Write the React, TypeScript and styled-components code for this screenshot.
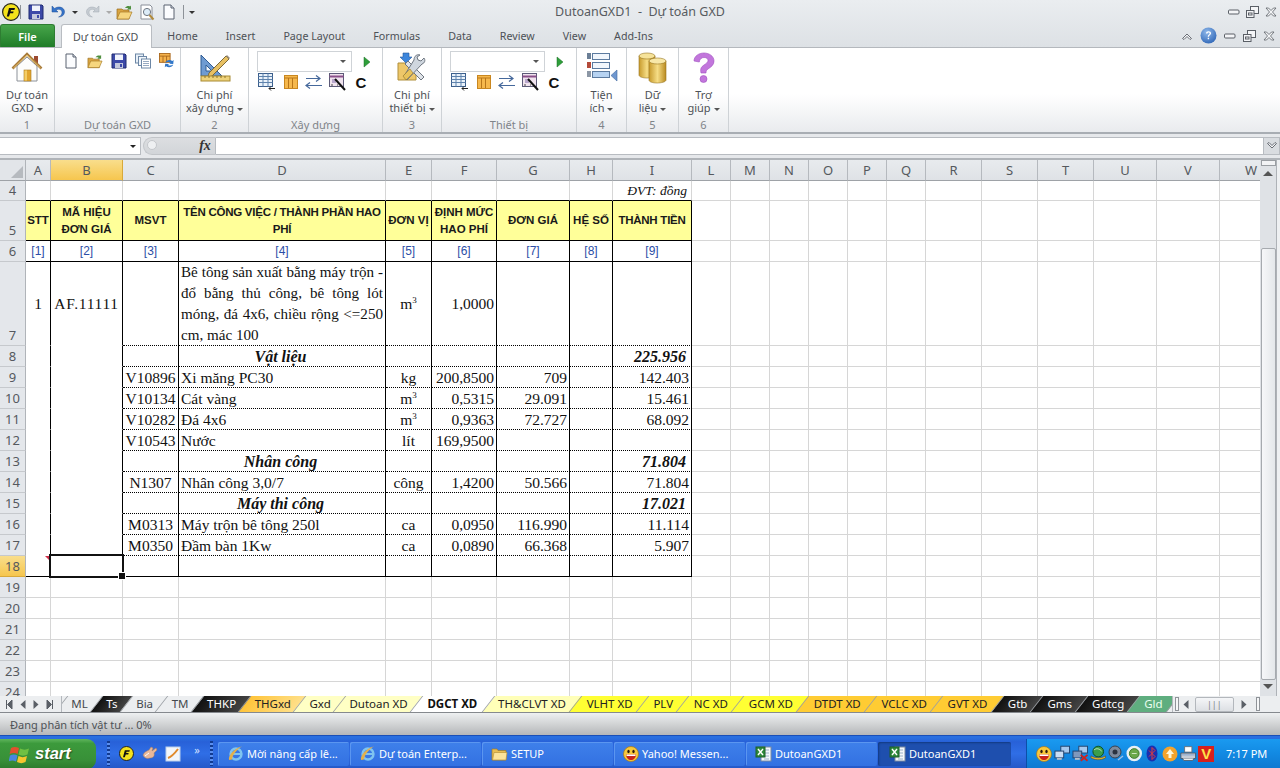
import React from "react";
import styled, { createGlobalStyle } from "styled-components";

const UI = `"Noto Sans", "Liberation Sans", sans-serif`;
const SERIF = `"Liberation Serif", "Times New Roman", serif`;
const ARIAL = `"Liberation Sans", Arial, sans-serif`;

const GlobalStyle = createGlobalStyle`
	html, body {
		margin: 0;
		padding: 0;
		width: 1280px;
		height: 768px;
		overflow: hidden;
		background: #fff;
	}
	* {
		box-sizing: border-box;
	}
`;

/* ---------- icons ---------- */

const Logo = ({ size = 18 }: { size?: number }) => (
	<svg width={size} height={size} viewBox="0 0 18 18">
		<circle cx="9" cy="9" r="8.4" fill="#f4e21c" stroke="#222" strokeWidth="1.2" />
		<path d="M7 5h6l-.6 2H9l-.4 1.4h3l-.5 1.8h-3L7 13.5H4.8z" fill="#111" />
	</svg>
);

const Floppy = ({ size = 16 }: { size?: number }) => (
	<svg width={size} height={size} viewBox="0 0 16 16">
		<path d="M1 1h13l1 1v13H1z" fill="#3c49a8" stroke="#1f2a70" />
		<rect x="4" y="1.5" width="8" height="5.5" fill="#f0f3fb" />
		<rect x="4" y="10" width="8" height="5" fill="#c3c8dc" />
		<rect x="9" y="11" width="2" height="3" fill="#3c49a8" />
	</svg>
);

const Undo = () => (
	<svg width="16" height="16" viewBox="0 0 16 16">
		<path d="M2 2v6h6L6 6c3-1.6 6-.4 6 2.5 0 2-1.2 3.6-3.4 4.5 3.6 0 5.9-2.2 5.9-5.2C14.5 3.5 9 1.5 4.6 4.4z" fill="#3573c9" stroke="#1f4f96" strokeWidth=".5" />
	</svg>
);

const Redo = () => (
	<svg width="16" height="16" viewBox="0 0 16 16" style={{ transform: "scaleX(-1)" }}>
		<path d="M2 2v6h6L6 6c3-1.6 6-.4 6 2.5 0 2-1.2 3.6-3.4 4.5 3.6 0 5.9-2.2 5.9-5.2C14.5 3.5 9 1.5 4.6 4.4z" fill="#c5cbd2" stroke="#a3abb3" strokeWidth=".5" />
	</svg>
);

const OpenFolder = ({ size = 17 }: { size?: number }) => (
	<svg width={size} height={size} viewBox="0 0 17 17">
		<path d="M1 5h5l1 1h6v9H1z" fill="#d9a441" stroke="#9a6f1f" strokeWidth=".7" />
		<path d="M1 15l3-7h12l-3 7z" fill="#f6d67e" stroke="#a67a26" strokeWidth=".7" />
		<path d="M9 4c1.5-2 3.5-2.5 5-1.5l1-1v4h-4l1.3-1.2C11 3.8 10 3.8 9 4z" fill="#4f8f3f" />
	</svg>
);

const Preview = () => (
	<svg width="17" height="17" viewBox="0 0 17 17">
		<path d="M2 1h9l2 2v12H2z" fill="#fff" stroke="#8a8f99" />
		<circle cx="8" cy="8" r="3.6" fill="#dcecf8" stroke="#6f7680" />
		<path d="M10.5 11l4 4.5" stroke="#b08a3c" strokeWidth="2" />
	</svg>
);

const NewDoc = ({ size = 16 }: { size?: number }) => (
	<svg width={size} height={size} viewBox="0 0 16 16">
		<path d="M3 1h7l3 3v11H3z" fill="#fbfcfe" stroke="#5b6270" />
		<path d="M10 1v3h3" fill="#d4dae3" stroke="#5b6270" />
	</svg>
);

const CopySheets = () => (
	<svg width="16" height="16" viewBox="0 0 16 16">
		<rect x=".5" y="1" width="8" height="9" fill="#e8f0f8" stroke="#6d87a6" />
		<rect x="3.5" y="3.5" width="8" height="9" fill="#f1f6fb" stroke="#6d87a6" />
		<rect x="6.5" y="6" width="9" height="9" fill="#fff" stroke="#6d87a6" />
		<path d="M8 8.5h6M8 10.5h6M8 12.5h6" stroke="#97aac2" />
	</svg>
);

const RefreshGrid = () => (
	<svg width="18" height="18" viewBox="0 0 18 18">
		<rect x=".5" y=".5" width="12" height="10" fill="#f4b24c" stroke="#a8661a" />
		<path d="M.5 3.5h12M4.5 3.5v7M8.5 3.5v7" stroke="#a8661a" />
		<path d="M7 11c1-3 5-4 8-2l1.5-1-.5 4.5-4.5-.5 1.5-1c-2-1-4-1-6 0z" fill="#2f76c9" />
		<path d="M16 13c-1 3-5 4-8 2l-1.5 1 .5-4 4.5.5-1.5 1c2 1 4 .8 6-.5z" fill="#2f76c9" />
	</svg>
);

const House = () => (
	<svg width="32" height="32" viewBox="0 0 32 32">
		<rect x="23" y="4" width="4" height="8" fill="#9c4a30" />
		<path d="M6 14v15h20V14L16 5z" fill="#fdfdfb" stroke="#8c9199" />
		<path d="M1.5 16.5L16 2l14.5 14.5" fill="none" stroke="#a87a3a" strokeWidth="2.6" />
		<path d="M2.5 16L16 3l13.5 13" fill="none" stroke="#e8c46e" strokeWidth="1" />
		<rect x="13" y="18" width="7" height="11" fill="#e2a52e" stroke="#a87a20" strokeWidth=".6" />
		<rect x="13.5" y="18.5" width="2.5" height="10" fill="#f4cd66" />
	</svg>
);

const SquarePencil = () => (
	<svg width="34" height="32" viewBox="0 0 34 32">
		<path d="M3 3v21h21z" fill="#6f9bd1" stroke="#2f5c94" />
		<path d="M8 13v6h6z" fill="#f4f7fb" stroke="#2f5c94" />
		<path d="M11 21L28 4l3 3-17 17-4 1z" fill="#e8c062" stroke="#7d6a3a" />
		<path d="M28 4l3 3 1-1-3-3z" fill="#9a8f7f" />
		<rect x="3" y="24" width="29" height="5" fill="#eed27a" stroke="#a88a32" />
		<path d="M7 24v2M11 24v2M15 24v2M19 24v2M23 24v2M27 24v2" stroke="#8f7426" />
	</svg>
);

const Tools = () => (
	<svg width="32" height="32" viewBox="0 0 32 32">
		<path d="M2 11h8l2 2h8v15H2z" fill="#eec769" stroke="#b08f3c" />
		<path d="M6 0h6v4h3l-6 6-6-6h3z" transform="translate(1 1)" fill="#3d86dc" stroke="#25599c" strokeWidth=".6" />
		<path d="M9 12l16 16 3-3L12 9z" fill="#dfe3e8" stroke="#6e7680" />
		<path d="M26 12c3-1 3.5-4 2-6l-3 3-3-1-1-3 3-2c-3-1-6 1-6 5L8 24l3 4z" fill="#cfd6de" stroke="#6e7680" />
		<path d="M14 17l-7 7 3 4 7-7z" fill="#e9c35b" stroke="#927427" strokeWidth=".6" />
	</svg>
);

const Combos = () => (
	<svg width="32" height="30" viewBox="0 0 32 30">
		<g stroke="#5b7a9f" fill="#fff">
			<rect x="6.5" y="1.5" width="17" height="6" fill="#f1f6fc" />
			<rect x="6.5" y="10.5" width="17" height="6" fill="#f1f6fc" />
			<rect x="6.5" y="19.5" width="17" height="6" fill="#b7d3f2" />
		</g>
		<rect x="1" y="1" width="4" height="6" fill="#6b7f96" />
		<rect x="1" y="10" width="4" height="6" fill="#b44a3a" />
		<rect x="1" y="19" width="4" height="6" fill="#8c97a5" />
		<path d="M31 18v11l-6-5.5z" fill="#6f97cf" stroke="#3f689f" strokeWidth=".6" />
	</svg>
);

const Database = () => (
	<svg width="30" height="32" viewBox="0 0 30 32">
		<defs>
			<linearGradient id="cyl" x1="0" x2="1" y1="0" y2="0">
				<stop offset="0" stopColor="#c79a2c" />
				<stop offset=".5" stopColor="#f6dd85" />
				<stop offset="1" stopColor="#b98a20" />
			</linearGradient>
		</defs>
		<path d="M1 4v19c0 2 4 3 8 3s8-1 8-3V4z" fill="url(#cyl)" stroke="#97741e" strokeWidth=".6" />
		<ellipse cx="9" cy="4" rx="8" ry="3" fill="#f6e39a" stroke="#97741e" strokeWidth=".6" />
		<path d="M11 9v19c0 2 4 3 8 3s9-1 9-3V9z" fill="url(#cyl)" stroke="#97741e" strokeWidth=".6" />
		<ellipse cx="19.5" cy="9" rx="8.5" ry="3" fill="#f8e8a8" stroke="#97741e" strokeWidth=".6" />
	</svg>
);

const Question = () => (
	<svg width="26" height="32" viewBox="0 0 26 32">
		<path d="M3 9C3 4 8 1 13 1s10 3 10 8c0 4-3 6-6 8-1.5 1-2 2-2 4h-5c-1-4 0-6 3-8 2-1.5 4-2.5 4-4.5S15.3 5.5 13 5.5 8.5 7 8.3 10z" fill="#c276dc" stroke="#a050c0" strokeWidth=".6" />
		<circle cx="12.5" cy="27" r="3.5" fill="#c276dc" stroke="#a050c0" strokeWidth=".6" />
	</svg>
);

const GridAdd = () => (
	<svg width="18" height="18" viewBox="0 0 18 18">
		<rect x=".5" y=".5" width="14" height="13" fill="#eaf2fa" stroke="#3c5f8c" />
		<path d="M.5 3.5h14M.5 6.5h14M.5 9.5h14M5 .5v13M10 .5v13" stroke="#5f83ad" />
		<path d="M11 15.5h6M13 13.5l-2 2 2 2" stroke="#222" fill="none" />
	</svg>
);

const OrangeTable = () => (
	<svg width="16" height="16" viewBox="0 0 16 16">
		<rect x="1.5" y="1.5" width="13" height="13" fill="#f6b84c" stroke="#c98720" />
		<path d="M1.5 4h13M5.5 4v10M9.5 4v10" stroke="#b8761a" />
	</svg>
);

const Swap = () => (
	<svg width="18" height="16" viewBox="0 0 18 16">
		<path d="M1 4.5h14M11 1.500l4 3-4 3M1 11.5h16M5 8.5l-4 3 4 3" stroke="#45689b" strokeWidth="1.2" fill="none" />
	</svg>
);

const Wand = () => (
	<svg width="18" height="18" viewBox="0 0 18 18">
		<rect x=".5" y=".5" width="14" height="13" fill="#f0e3ee" stroke="#5c5a78" />
		<path d="M.5 3.5h14" stroke="#8a4f8a" strokeWidth="2" />
		<path d="M3 6h4v4H3z" fill="#b9a7cc" />
		<path d="M6 6l10 11" stroke="#111" strokeWidth="2" />
		<path d="M2 12h2M8 12h1" stroke="#444" />
	</svg>
);

const Play = () => (
	<svg width="8" height="12" viewBox="0 0 8 12">
		<path d="M1 1l6 5-6 5z" fill="#2e9e3a" stroke="#1a6f25" strokeWidth=".5" />
	</svg>
);

const Chevron = ({ down }: { down?: boolean }) => (
	<svg width="12" height="10" viewBox="0 0 12 10" style={down ? { transform: "scaleY(-1)" } : undefined}>
		<path d="M1.5 7.5L6 3l4.5 4.5-1.5 1L6 5.5l-3 3z" fill="#f4f5f7" stroke="#5a5f66" strokeWidth=".9" />
	</svg>
);

const WinMin = () => (
	<svg width="12" height="10" viewBox="0 0 12 10">
		<rect x=".5" y="3" width="10.5" height="4" rx="1" fill="#f4f5f7" stroke="#5a5f66" />
	</svg>
);

const WinRestore = () => (
	<svg width="13" height="12" viewBox="0 0 13 12">
		<rect x="4.5" y=".5" width="8" height="7" fill="#f4f5f7" stroke="#5a5f66" />
		<rect x=".5" y="4.5" width="7.5" height="7" fill="#f4f5f7" stroke="#5a5f66" />
		<rect x="2.5" y="7" width="3.5" height="2" fill="none" stroke="#5a5f66" />
	</svg>
);

const WinClose = () => (
	<svg width="12" height="10" viewBox="0 0 12 10">
		<path d="M1 1h2.5L6 3.5 8.5 1H11L7.5 5 11 9H8.5L6 6.5 3.5 9H1l3.5-4z" fill="#f4f5f7" stroke="#5a5f66" strokeWidth=".8" />
	</svg>
);

const Help = () => (
	<svg width="17" height="17" viewBox="0 0 17 17">
		<defs>
			<radialGradient id="hlp" cx=".4" cy=".3" r=".8">
				<stop offset="0" stopColor="#8fb8ea" />
				<stop offset="1" stopColor="#2a62b4" />
			</radialGradient>
		</defs>
		<circle cx="8.5" cy="8.5" r="8" fill="url(#hlp)" />
		<path d="M6 6.5c0-1.5 1.2-2.3 2.6-2.3s2.5.9 2.5 2.1c0 1.700-2.100 1.800-2.100 3.500H7.700c0-2.300 1.900-2.400 1.900-3.400 0-.5-.4-.9-1-.9s-1.100.4-1.100 1zM7.700 10.800h1.400v1.500H7.700z" fill="#fff" />
	</svg>
);

const NavFirst = () => (
	<svg width="8" height="9" viewBox="0 0 8 9">
		<path d="M1.5 0v9M7 0v9L2.5 4.5z" stroke="#5a5f66" fill="#5a5f66" />
	</svg>
);
const NavPrev = () => (
	<svg width="6" height="9" viewBox="0 0 6 9">
		<path d="M5.5 0v9L.5 4.5z" fill="#5a5f66" />
	</svg>
);
const NavNext = () => (
	<svg width="6" height="9" viewBox="0 0 6 9">
		<path d="M.5 0v9l5-4.5z" fill="#5a5f66" />
	</svg>
);
const NavLast = () => (
	<svg width="8" height="9" viewBox="0 0 8 9">
		<path d="M6.5 0v9M1 0v9l4.5-4.5z" stroke="#5a5f66" fill="#5a5f66" />
	</svg>
);

const XpFlag = () => (
	<svg width="21" height="20" viewBox="0 0 21 20">
		<path d="M2 4c2.500-1.500 5-1.500 8 0l-1.400 6c-2.500-1.500-5-1.500-8 0z" fill="#e2502e" />
		<path d="M11 4.500c3 1.500 6 1.500 9 0l-1.500 6c-3 1.500-6 1.500-9 0z" fill="#6fc043" />
		<path d="M1 11.500c2.500-1.500 5-1.500 7.500 0L7 17.500c-2.500-1.500-5-1.500-7.500 0z" fill="#4a86e0" />
		<path d="M9.500 12c3 1.500 5.500 1.500 8.500 0L16.500 18c-3 1.500-5.500 1.500-8.500 0z" fill="#f6c62e" />
	</svg>
);

const HandIcon = () => (
	<svg width="16" height="15" viewBox="0 0 16 15">
		<path d="M1 9c1-3 4-4 6-5l2-3 2 1-1 3 4-3 1 2-3 3c1 3-1 5-4 5-3 1-6 0-7-3z" fill="#e8b89a" stroke="#a87a5a" strokeWidth=".5" />
		<path d="M3 10l4-3" stroke="#fff" />
	</svg>
);

const ChartDoc = () => (
	<svg width="16" height="16" viewBox="0 0 16 16">
		<rect x="1" y="1" width="14" height="14" fill="#f2f6fb" stroke="#bcd0ea" />
		<path d="M3 12C6 11 10 7 13 3" stroke="#e08a2c" strokeWidth="2" fill="none" />
	</svg>
);

const IeIcon = () => (
	<svg width="17" height="17" viewBox="0 0 17 17">
		<circle cx="9" cy="9" r="5.5" fill="none" stroke="#7fc4f0" strokeWidth="2.4" />
		<path d="M4 9h10" stroke="#7fc4f0" strokeWidth="1.8" />
		<path d="M2 15C1 11 7 3 15 1.5c-5 2.5-10 9-10 13z" fill="#e2b04c" />
	</svg>
);

const FolderTask = () => (
	<svg width="17" height="16" viewBox="0 0 17 16">
		<path d="M1 3h5l1 1.5h8V14H1z" fill="#e8bd52" stroke="#9d7c2b" strokeWidth=".7" />
		<path d="M1.5 14L3 6.5h13L15 14z" fill="#fbe39a" stroke="#b7933b" strokeWidth=".7" />
	</svg>
);

const Smiley = ({ size = 16 }: { size?: number }) => (
	<svg width={size} height={size} viewBox="0 0 16 16">
		<circle cx="8" cy="8" r="7.5" fill="#f8c93a" stroke="#a8761a" strokeWidth=".7" />
		<ellipse cx="5.5" cy="5.5" rx="1.2" ry="1.7" fill="#2a1a10" />
		<ellipse cx="10.5" cy="5.5" rx="1.2" ry="1.7" fill="#2a1a10" />
		<path d="M3 8.5h10c0 3.5-2.5 5.5-5 5.5s-5-2-5-5.500z" fill="#c8241c" />
		<path d="M3.5 8.5h9V10h-9z" fill="#fff" />
	</svg>
);

const ExcelDoc = () => (
	<svg width="17" height="17" viewBox="0 0 17 17">
		<rect x="6" y="2" width="10" height="14" fill="#f4f7fb" stroke="#7a8aa0" />
		<path d="M9 5h5M9 8h5M9 11h5M9 14h5" stroke="#9ab0c8" />
		<rect x="1" y="2" width="9" height="10" fill="#2f8a3c" stroke="#1e5f28" />
		<path d="M3 4l5 6M8 4l-5 6" stroke="#fff" strokeWidth="1.4" />
	</svg>
);

const MonitorPair = ({ cross }: { cross?: boolean }) => (
	<svg width="17" height="17" viewBox="0 0 17 17">
		<rect x="7" y="1" width="9" height="7" fill="#a6c8ee" stroke="#26456e" />
		<rect x="1" y="6" width="9" height="7" fill={cross ? "#7f98bc" : "#c9ddf5"} stroke="#26456e" />
		<rect x="3" y="13" width="5" height="2" fill="#b8bec8" />
		{cross && <path d="M9 10l7 6M16 10l-7 6" stroke="#d2201c" strokeWidth="1.8" />}
	</svg>
);

const TrayGlobe = () => (
	<svg width="17" height="17" viewBox="0 0 17 17">
		<circle cx="8.5" cy="6.5" r="5.5" fill="#3b9e4a" stroke="#0e4e20" />
		<path d="M4 5c2-2 5-2 8 1" stroke="#cfe9c4" fill="none" />
		<path d="M1 11c3 2 10 3 15 0v2c-5 3-12 2-15 0z" fill="#e6b62c" stroke="#5a430c" strokeWidth=".5" />
	</svg>
);

const Speaker = () => (
	<svg width="16" height="17" viewBox="0 0 16 17">
		<circle cx="7" cy="7" r="6" fill="#7d8a9c" stroke="#39424f" />
		<circle cx="7" cy="7" r="2.5" fill="#2b3340" />
		<path d="M10 15l5-4" stroke="#9dc0e6" strokeWidth="1.4" />
	</svg>
);

const GreenDot = () => (
	<svg width="17" height="17" viewBox="0 0 17 17">
		<circle cx="8.5" cy="8.5" r="8" fill="#e8f0f4" />
		<circle cx="8.5" cy="8.5" r="5" fill="#6aa84a" stroke="#3a7a2a" />
		<path d="M6 8.5h5" stroke="#cfe9c4" />
	</svg>
);

const Bluetooth = () => (
	<svg width="12" height="17" viewBox="0 0 12 17">
		<ellipse cx="6" cy="8.5" rx="5.5" ry="8" fill="#1a2fb0" />
		<path d="M3 5.5l6 6-3 3v-12l3 3-6 6" stroke="#e23c3c" fill="none" />
	</svg>
);

const OrangeUp = () => (
	<svg width="16" height="16" viewBox="0 0 16 16">
		<circle cx="8" cy="8" r="7.5" fill="#f4a32c" />
		<path d="M8 3l4 5H9.5v4h-3V8H4z" fill="#fff6d8" />
	</svg>
);

const Printer = () => (
	<svg width="18" height="17" viewBox="0 0 18 17">
		<path d="M5 1h8v6H5z" fill="#fff" stroke="#67707c" />
		<path d="M1 8h16v6H1z" fill="#c5ccd6" stroke="#4b5562" />
		<path d="M3 14l1 2h10l1-2" fill="#fff" stroke="#4b5562" />
		<path d="M2 10h14" stroke="#7ea0cc" />
	</svg>
);

const Caret = styled.span<{ $c?: string }>`
	display: inline-block;
	width: 0;
	height: 0;
	border-left: 3px solid transparent;
	border-right: 3px solid transparent;
	border-top: 3px solid ${({ $c }) => $c || "#555"};
	vertical-align: middle;
	margin-left: 3px;
`;

/* ---------- window header ---------- */

const Page = styled.div`
	width: 1280px;
	height: 768px;
	display: flex;
	flex-direction: column;
	overflow: hidden;
	font-family: ${UI};
	background: #fff;
`;

const Head = styled.div`
	height: 48px;
	background: linear-gradient(#eaedf0, #dde1e5);
	border-bottom: 1px solid #b4b8bd;
`;

const TitleBar = styled.div`
	height: 24px;
	display: grid;
	grid-template-columns: 1fr auto 1fr;
	align-items: center;
`;

const Qat = styled.div`
	display: flex;
	align-items: center;
	padding-left: 2px;
	height: 22px;
`;

const QatBtn = styled.span<{ $w?: number; $ml?: number }>`
	width: ${({ $w }) => $w || 22}px;
	margin-left: ${({ $ml }) => $ml || 0}px;
	height: 20px;
	display: flex;
	align-items: center;
	justify-content: center;
`;

const QatSep = styled.span<{ $l: number; $r: number }>`
	width: 1px;
	height: 14px;
	background: #8d9298;
	margin: 0 ${({ $r }) => $r}px 0 ${({ $l }) => $l}px;
`;

const Title = styled.div`
	font-size: 12.5px;
	color: #575b60;
	white-space: pre;
	padding-bottom: 2px;
`;

const WinButtons = styled.div<{ $gap: number }>`
	display: flex;
	align-items: center;
	justify-content: flex-end;
	gap: ${({ $gap }) => $gap}px;
	padding-right: 3px;
`;

const TabRow = styled.div`
	height: 23px;
	display: flex;
	align-items: flex-end;
`;

const FileTab = styled.div`
	width: 55px;
	height: 23px;
	margin-right: 6px;
	color: #fff;
	font-size: 11px;
	font-weight: 600;
	display: flex;
	align-items: center;
	justify-content: center;
	background: linear-gradient(#47a54a, #1f7c28);
	border: 1px solid #2e7d32;
	border-bottom: 0;
	border-radius: 3px 3px 0 0;
`;

const RibbonTab = styled.div<{ $active?: boolean }>`
	height: ${({ $active }) => ($active ? 24 : 23)}px;
	padding: ${({ $active }) => ($active ? "0 13px 0 11px" : "0 14px")};
	margin-right: ${({ $active }) => ($active ? 1 : 0)}px;
	margin-bottom: ${({ $active }) => ($active ? -1 : 0)}px;
	font-size: 10.7px;
	color: #4d5156;
	display: flex;
	align-items: center;
	white-space: nowrap;
	background: ${({ $active }) => ($active ? "#fff" : "transparent")};
	border: ${({ $active }) => ($active ? "1px solid #b9bdc2" : "0")};
	border-bottom: 0;
	border-radius: 3px 3px 0 0;
	position: relative;
`;

const HelpArea = styled.div`
	margin-left: auto;
	display: flex;
	align-items: center;
	gap: 7px;
	padding-right: 5px;
	height: 23px;
`;

/* ---------- ribbon ---------- */

const Ribbon = styled.div`
	height: 86px;
	display: flex;
	background: linear-gradient(#fff 0%, #fff 55%, #e9ebee 100%);
	border-bottom: 2px solid #a8adb3;
`;

const Group = styled.div<{ $w: number }>`
	width: ${({ $w }) => $w}px;
	flex: none;
	display: flex;
	flex-direction: column;
	border-right: 1px solid #ced2d6;
`;

const GroupBody = styled.div`
	flex: 1;
	min-height: 0;
`;

const GroupLabel = styled.div`
	height: 17px;
	font-size: 11px;
	line-height: 19px;
	color: #7f8489;
	text-align: center;
`;

const BigButton = styled.div`
	display: flex;
	flex-direction: column;
	align-items: center;
	padding-top: 4px;
	font-size: 11px;
	line-height: 13px;
	color: #4d5156;
	text-align: center;
`;

const BigIcon = styled.div`
	height: 34px;
	display: flex;
	align-items: flex-start;
	justify-content: center;
	margin-bottom: 2px;
`;

const SmallRow = styled.div<{ $gap: number }>`
	display: flex;
	align-items: center;
	gap: ${({ $gap }) => $gap}px;
	padding: 4px 0 0 8px;
`;

const Slot = styled.span`
	width: 16px;
	height: 18px;
	display: flex;
	align-items: center;
	justify-content: center;
`;

const ComboRow = styled.div`
	display: flex;
	align-items: center;
	padding: 3px 0 0 8px;
`;

const Combo = styled.div`
	width: 95px;
	height: 21px;
	background: #fff;
	border: 1px solid #cfd3d7;
	display: flex;
	align-items: center;
	justify-content: flex-end;
	padding-right: 5px;
	margin-right: 11px;
`;

const ToolRow = styled.div`
	display: flex;
	align-items: center;
	gap: 3.5px;
	padding: 0 0 0 8px;
`;

const ToolSlot = styled.span`
	width: 20px;
	height: 20px;
	display: flex;
	align-items: center;
	justify-content: center;
	font-family: ${ARIAL};
	font-weight: 700;
	font-size: 15px;
	color: #111;
`;

/* ---------- formula bar ---------- */

const FormulaBar = styled.div`
	height: 26px;
	padding-top: 3px;
	display: flex;
	background: #e6e8eb;
	border-bottom: 2px solid #b0b4b9;
`;

const FormulaInner = styled.div`
	height: 18px;
	flex: 1;
	display: flex;
	align-items: stretch;
`;

const NameBox = styled.div`
	width: 141px;
	background: #fff;
	border: 1px solid #b8bcc1;
	border-width: 1px 1px 1px 0;
	display: flex;
	align-items: center;
	justify-content: flex-end;
	padding-right: 4px;
`;

const FxWell = styled.div`
	width: 73px;
	display: flex;
	align-items: center;
	justify-content: flex-end;
	font-family: ${SERIF};
	font-style: italic;
	font-weight: 700;
	font-size: 14px;
	color: #333;
	background: linear-gradient(#dcdee1, #d2d5d9);
	border-radius: 9px 0 0 9px;
	border: 1px solid #c2c5c9;
	border-right: 1px solid #b8bcc1;
	margin-left: 2px;
	position: relative;
	&::before {
		content: "";
		position: absolute;
		left: 3px;
		top: 2px;
		width: 8px;
		height: 8px;
		border-radius: 50%;
		background: #eef0f2;
		border: 1px solid #c4c7cb;
	}
`;

const FxText = styled.span`
	width: 20px;
	text-align: center;
`;

const FormulaInput = styled.div`
	flex: 1;
	background: #fff;
	border: 1px solid #b8bcc1;
	border-width: 1px 1px 1px 0;
`;

const FormulaDrop = styled.div`
	width: 16px;
	background: #d9dce0;
	border: 1px solid #b8bcc1;
	border-left: 0;
	display: flex;
	align-items: center;
	justify-content: center;
`;

/* ---------- sheet ---------- */

const SheetArea = styled.div`
	height: 536px;
	display: flex;
	overflow: hidden;
`;

const colWidths = [26, 25, 72, 56, 207, 46, 65, 73, 43, 79, 39, 39, 39, 39, 39, 39, 56, 56, 56, 63, 63, 63];
const rowHeights = [21, 20, 40, 21, 84, ...Array(16).fill(21), 21];

const SheetGrid = styled.div`
	width: 1260px;
	height: 536px;
	display: grid;
	grid-template-columns: ${colWidths.map((w) => `${w}px`).join(" ")};
	grid-template-rows: ${rowHeights.map((h) => `${h}px`).join(" ")};
	overflow: hidden;
`;

const Corner = styled.div`
	background: #e2e5e9;
	border-right: 1px solid #b0b4b9;
	border-bottom: 1px solid #9ea2a7;
	position: relative;
	&::after {
		content: "";
		position: absolute;
		right: 2px;
		bottom: 2px;
		border-left: 12px solid transparent;
		border-bottom: 12px solid #b6babf;
	}
`;

const ColHead = styled.div<{ $sel?: boolean }>`
	background: ${({ $sel }) => ($sel ? "linear-gradient(#f9de8c, #f6c64e)" : "linear-gradient(#e8ebee, #dfe2e6)")};
	border-right: 1px solid ${({ $sel }) => ($sel ? "#d8a93a" : "#b5b9be")};
	border-bottom: 1px solid #9ea2a7;
	color: #55595e;
	font-size: 13px;
	font-family: ${UI};
	display: flex;
	align-items: center;
	justify-content: center;
`;

const RowHead = styled.div<{ $sel?: boolean }>`
	background: ${({ $sel }) => ($sel ? "linear-gradient(#f9de8c, #f6c64e)" : "#e4e7eb")};
	border-right: 1px solid #b0b4b9;
	border-bottom: 1px solid ${({ $sel }) => ($sel ? "#d8a93a" : "#c6c9cd")};
	color: #55595e;
	font-size: 13px;
	line-height: 15px;
	display: flex;
	align-items: flex-end;
	justify-content: center;
	padding-bottom: 2px;
`;

type LineKind = "grid" | "solid" | "dotted" | "none";
type CellKind = "plain" | "head" | "index" | "note" | "group" | "sum";

const lineCss = (l: LineKind) =>
	l === "solid" ? "1px solid #000" : l === "dotted" ? "1px dotted #000" : l === "none" ? "1px solid transparent" : "1px solid #d6d6d6";

const Cell = styled.div<{ $kind?: CellKind; $align?: string; $line: LineKind; $frame?: boolean; $justify?: boolean }>`
	position: relative;
	display: flex;
	align-items: center;
	justify-content: ${({ $align }) => ($align === "right" ? "flex-end" : $align === "center" ? "center" : "flex-start")};
	text-align: ${({ $align, $justify }) => ($justify ? "justify" : $align || "left")};
	padding: 0 2px;
	white-space: ${({ $justify }) => ($justify ? "normal" : "nowrap")};
	border-right: ${({ $frame }) => ($frame ? "1px solid #000" : "1px solid #d6d6d6")};
	border-bottom: ${({ $line }) => lineCss($line)};
	color: #111;
	font-family: ${SERIF};
	font-size: ${({ $justify }) => ($justify ? 15.1 : 15.5)}px;
	line-height: 21px;
	${({ $kind }) =>
		$kind === "head" &&
		`
		background: #ffff99;
		font-family: ${ARIAL};
		font-weight: 700;
		font-size: 11.5px;
		line-height: 17px;
		color: #1a1a1a;
		padding: 0;
	`}
	${({ $kind }) =>
		$kind === "index" &&
		`
		font-family: ${ARIAL};
		font-size: 12px;
		color: #2c4ea6;
	`}
	${({ $kind }) =>
		$kind === "note" &&
		`
		font-style: italic;
		font-size: 13.5px;
		padding-right: 4px;
	`}
	${({ $kind }) =>
		($kind === "group" || $kind === "sum") &&
		`
		font-style: italic;
		font-weight: 700;
		font-size: 16px;
		padding-right: 5px;
	`}
`;

const WideCode = styled.span`
	letter-spacing: 0.7px;
`;

const TightHead = styled.span`
	letter-spacing: -0.25px;
`;

const Sup = styled.sup`
	font-size: 9px;
	line-height: 0;
`;

const Selection = styled.div`
	position: absolute;
	left: -2px;
	right: -2px;
	top: -2px;
	bottom: -2px;
	border: 2px solid #111;
	outline: 1px solid #fff;
	outline-offset: -3px;
	z-index: 2;
	&::after {
		content: "";
		position: absolute;
		right: -4px;
		bottom: -4px;
		width: 6px;
		height: 6px;
		background: #111;
		border: 1px solid #fff;
	}
`;

const CommentMark = styled.span`
	position: absolute;
	right: 0;
	top: 0;
	border-left: 5px solid transparent;
	border-top: 5px solid #d0304a;
`;

const VScroll = styled.div`
	width: 20px;
	height: 536px;
	display: flex;
	flex-direction: column;
	align-items: center;
	padding-right: 4px;
	background: #dfe2e6;
	box-shadow: inset -3px 0 0 #eef0f2, inset -4px 0 0 #aeb2b7;
`;

const SplitHandle = styled.div`
	width: 15px;
	height: 6px;
	background: #f2f3f5;
	border: 1px solid #9a9ea3;
	margin-bottom: 5px;
`;

const ScrollArrow = styled.div<{ $down?: boolean }>`
	width: 0;
	height: 0;
	border-left: 5px solid transparent;
	border-right: 5px solid transparent;
	${({ $down }) => ($down ? "border-top: 5px solid #555;" : "border-bottom: 5px solid #555;")}
`;

const VThumb = styled.div`
	width: 15px;
	height: 432px;
	margin-top: 72px;
	margin-bottom: 4px;
	background: linear-gradient(90deg, #f6f7f9, #e4e7ea);
	border: 1px solid #a6aaaf;
	border-radius: 2px;
`;

/* ---------- sheet tabs ---------- */

const TabsBar = styled.div`
	height: 17px;
	display: flex;
	background: #eceef0;
	border-bottom: 1px solid #85898e;
`;

const TabNav = styled.div`
	width: 62px;
	flex: none;
	display: flex;
	align-items: center;
	padding-left: 5px;
	gap: 7px;
	border-right: 1px solid #b4b8bd;
`;

const TabStrip = styled.div`
	width: 1110px;
	flex: none;
	display: flex;
	overflow: hidden;
`;

const SheetTab = styled.div<{ $bg?: string; $fg?: string; $active?: boolean; $pad: number }>`
	position: relative;
	flex: none;
	height: 16px;
	padding: 0 ${({ $pad }) => $pad}px;
	font-family: ${UI};
	font-size: 11.5px;
	font-weight: ${({ $active }) => ($active ? 700 : 400)};
	line-height: 15px;
	white-space: nowrap;
	color: ${({ $fg }) => $fg || "#45494e"};
	z-index: ${({ $active }) => ($active ? 2 : 1)};
	&::before {
		content: "";
		position: absolute;
		inset: 0 -1px 0 -1px;
		z-index: -1;
		transform: skewX(-38deg);
		background: ${({ $bg, $active }) => ($active ? "#fff" : $bg || "#eceef0")};
		border-left: 1px solid #9a9ea3;
		border-right: 1px solid #9a9ea3;
	}
`;

const HScroll = styled.div`
	flex: 1;
	display: flex;
	align-items: center;
	padding-right: 20px;
	background: #eceef0;
	border-left: 1px solid #b4b8bd;
`;

const HHandle = styled.span<{ $end?: boolean }>`
	width: 4px;
	height: 14px;
	background: #f6f7f8;
	border: 1px solid #8f9398;
	margin: ${({ $end }) => ($end ? "0 0 0 auto" : "0 4px 0 2px")};
`;

const HThumb = styled.div`
	width: 39px;
	height: 15px;
	margin: 0 7px 0 6px;
	background: linear-gradient(#f5f6f8, #dcdfe3);
	border: 1px solid #b3b7bc;
	border-radius: 2px;
	display: flex;
	align-items: center;
	justify-content: center;
	font-size: 8px;
	color: #777;
	letter-spacing: 0.5px;
`;

const StatusBar = styled.div`
	height: 22px;
	padding-left: 10px;
	font-size: 11px;
	display: flex;
	align-items: center;
	color: #4e5257;
	background: linear-gradient(#eef0f1, #b5b7b9);
`;

/* ---------- taskbar ---------- */

const Taskbar = styled.div`
	height: 33px;
	padding-top: 3px;
	display: flex;
	align-items: center;
	background: linear-gradient(#2a6fe0 0%, #2a6fe0 6%, #2861d8 18%, #2f6ee6 55%, #2558c8 100%);
	border-top: 1px solid #1a4fb8;
`;

const StartButton = styled.div`
	width: 96px;
	height: 30px;
	flex: none;
	display: flex;
	align-items: center;
	gap: 5px;
	padding-left: 9px;
	color: #fff;
	font-family: ${ARIAL};
	font-style: italic;
	font-weight: 700;
	font-size: 16.5px;
	text-shadow: 1px 1px 1px #2a4f22;
	background: linear-gradient(#5fb55c 0%, #3c9a3c 15%, #389038 70%, #2c7a2c 100%);
	border-radius: 0 9px 9px 0;
`;

const Grip = styled.span`
	width: 3px;
	height: 25px;
	flex: none;
	background: repeating-linear-gradient(#123a90 0 2px, #5b8ff0 2px 4px);
`;

const QuickLaunch = styled.div`
	width: 122px;
	flex: none;
	display: flex;
	align-items: center;
	padding-left: 11px;
`;

const QuickSlot = styled.span<{ $first?: boolean }>`
	width: 23px;
	height: 20px;
	display: flex;
	align-items: center;
	justify-content: center;
	margin-left: ${({ $first }) => ($first ? 5 : 0)}px;
`;

const More = styled.span`
	width: 26px;
	text-align: center;
	color: #cfe0ff;
	font-size: 11px;
	margin-top: -8px;
`;

const Tasks = styled.div`
	flex: 1;
	display: flex;
	gap: 1px;
	height: 24px;
`;

const Task = styled.div<{ $active?: boolean; $w?: number }>`
	width: ${({ $w }) => $w || 131}px;
	height: 24px;
	flex: none;
	display: flex;
	align-items: center;
	gap: 3px;
	padding-left: ${({ $active }) => ($active ? 11 : 9)}px;
	font-size: 11px;
	color: #fff;
	white-space: nowrap;
	overflow: hidden;
	border-radius: 2px;
	background: ${({ $active }) => ($active ? "#1e4fae" : "linear-gradient(#3f80ea, #3371e2)")};
	box-shadow: ${({ $active }) => ($active ? "inset 1px 1px 2px #123a80" : "inset 1px 1px 0 #5b96f0")};
`;

const Tray = styled.div`
	width: 254px;
	height: 30px;
	flex: none;
	display: flex;
	align-items: center;
	gap: 1.5px;
	padding-left: 9px;
	background: linear-gradient(#1a9af0, #1289e2 50%, #0f78d0);
	border-left: 1px solid #0c4fa8;
`;

const TrayIcon = styled.span`
	width: 16.5px;
	height: 20px;
	flex: none;
	display: flex;
	align-items: center;
	justify-content: center;
`;

const VBadge = styled.span`
	width: 16px;
	height: 16px;
	background: #d8201c;
	color: #ffe24a;
	font-family: ${ARIAL};
	font-weight: 700;
	font-size: 15px;
	line-height: 16px;
	text-align: center;
`;

const Clock = styled.span`
	margin-left: 10px;
	color: #fff;
	font-size: 11px;
`;

/* ---------- data ---------- */

type Row = {
	n: number;
	line: LineKind;
	cells: (React.ReactNode | null)[];
};

const m3 = (
	<span>
		m<Sup>3</Sup>
	</span>
);

const rows: Row[] = [
	{ n: 9, line: "dotted", cells: [null, null, "V10896", "Xi măng PC30", "kg", "200,8500", "709", null, "142.403"] },
	{ n: 10, line: "dotted", cells: [null, null, "V10134", "Cát vàng", m3, "0,5315", "29.091", null, "15.461"] },
	{ n: 11, line: "dotted", cells: [null, null, "V10282", "Đá 4x6", m3, "0,9363", "72.727", null, "68.092"] },
	{ n: 12, line: "dotted", cells: [null, null, "V10543", "Nước", "lít", "169,9500", null, null, null] },
];

const rowsB: Row[] = [{ n: 14, line: "dotted", cells: [null, null, "N1307", "Nhân công 3,0/7", "công", "1,4200", "50.566", null, "71.804"] }];

const rowsC: Row[] = [
	{ n: 16, line: "dotted", cells: [null, null, "M0313", "Máy trộn bê tông 250l", "ca", "0,0950", "116.990", null, "11.114"] },
	{ n: 17, line: "dotted", cells: [null, null, "M0350", "Đầm bàn 1Kw", "ca", "0,0890", "66.368", null, "5.907"] },
];

const colLetters = ["A", "B", "C", "D", "E", "F", "G", "H", "I", "L", "M", "N", "O", "P", "Q", "R", "S", "T", "U", "V", "W"];
const extraCols = 12;

const Blank = () => (
	<>
		{Array.from({ length: extraCols }).map((_, i) => (
			<Cell key={i} $line="grid" />
		))}
	</>
);

const heads: React.ReactNode[] = [
	"STT",
	<>
		MÃ HIỆU
		<br />
		ĐƠN GIÁ
	</>,
	"MSVT",
	<TightHead>
		TÊN CÔNG VIỆC / THÀNH PHẦN HAO
		<br />
		PHÍ
	</TightHead>,
	"ĐƠN VỊ",
	<>
		ĐỊNH MỨC
		<br />
		HAO PHÍ
	</>,
	"ĐƠN GIÁ",
	"HỆ SỐ",
	<TightHead>THÀNH TIỀN</TightHead>,
];

const DataRow = ({ row }: { row: Row }) => {
	const aligns = ["center", "center", "center", "left", "center", "right", "right", "right", "right"];
	return (
		<>
			<RowHead>{row.n}</RowHead>
			{row.cells.map((c, i) => (
				<Cell key={i} $frame $line={i < 2 ? "none" : row.line} $align={aligns[i]}>
					{c}
				</Cell>
			))}
			<Blank />
		</>
	);
};

const GroupRow = ({ n, label, sum }: { n: number; label: string; sum: string }) => (
	<>
		<RowHead>{n}</RowHead>
		<Cell $frame $line="none" />
		<Cell $frame $line="none" />
		<Cell $frame $line="dotted" />
		<Cell $frame $line="dotted" $kind="group" $align="center">
			{label}
		</Cell>
		<Cell $frame $line="dotted" />
		<Cell $frame $line="dotted" />
		<Cell $frame $line="dotted" />
		<Cell $frame $line="dotted" />
		<Cell $frame $line="dotted" $kind="sum" $align="right">
			{sum}
		</Cell>
		<Blank />
	</>
);

const EmptyRow = ({ n }: { n: number }) => (
	<>
		<RowHead>{n}</RowHead>
		{Array.from({ length: 9 }).map((_, i) => (
			<Cell key={i} $line="grid" />
		))}
		<Blank />
	</>
);

const BLACK = "linear-gradient(90deg, #111, #444)";

const sheetTabs: { t: string; bg?: string; fg?: string; active?: boolean }[] = [
	{ t: "ML" },
	{ t: "Ts", bg: BLACK, fg: "#fff" },
	{ t: "Bia" },
	{ t: "TM" },
	{ t: "THKP", bg: BLACK, fg: "#fff" },
	{ t: "THGxd", bg: "linear-gradient(90deg, #ffc43a, #ffe08a)", fg: "#222" },
	{ t: "Gxd", bg: "#ffffc4", fg: "#222" },
	{ t: "Dutoan XD", bg: "#ffffc4", fg: "#222" },
	{ t: "DGCT XD", active: true, fg: "#111" },
	{ t: "TH&CLVT XD", bg: "#ffffb8", fg: "#222" },
	{ t: "VLHT XD", bg: "#ffff33", fg: "#222" },
	{ t: "PLV", bg: "#ffff33", fg: "#222" },
	{ t: "NC XD", bg: "#ffff33", fg: "#222" },
	{ t: "GCM XD", bg: "#ffff33", fg: "#222" },
	{ t: "DTDT XD", bg: "#ffcc33", fg: "#222" },
	{ t: "VCLC XD", bg: "#ffcc33", fg: "#222" },
	{ t: "GVT XD", bg: "#ffcc33", fg: "#222" },
	{ t: "Gtb", bg: BLACK, fg: "#fff" },
	{ t: "Gms", bg: BLACK, fg: "#fff" },
	{ t: "Gdtcg", bg: BLACK, fg: "#fff" },
	{ t: "Gld", bg: "#5fae7f", fg: "#eafff0" },
];

const tabPad = (i: number) => (i < 8 ? 9.3 : i < 17 ? 10.4 : 10);

const SheetTools = () => (
	<>
		<ComboRow>
			<Combo>
				<Caret />
			</Combo>
			<Play />
		</ComboRow>
		<ToolRow>
			<ToolSlot>
				<GridAdd />
			</ToolSlot>
			<ToolSlot>
				<OrangeTable />
			</ToolSlot>
			<ToolSlot>
				<Swap />
			</ToolSlot>
			<ToolSlot>
				<Wand />
			</ToolSlot>
			<ToolSlot>C</ToolSlot>
		</ToolRow>
	</>
);

const App: React.FC = () => {
	return (
		<Page>
			<GlobalStyle />
			<Head>
				<TitleBar>
					<Qat>
						<QatBtn $w={18}>
							<Logo />
						</QatBtn>
						<QatSep $l={0} $r={4} />
						<QatBtn>
							<Floppy />
						</QatBtn>
						<QatBtn>
							<Undo />
						</QatBtn>
						<Caret $c="#333" />
						<QatBtn $w={20} $ml={5}>
							<Redo />
						</QatBtn>
						<Caret $c="#aaa" />
						<QatBtn $w={24}>
							<OpenFolder />
						</QatBtn>
						<QatBtn>
							<Preview />
						</QatBtn>
						<QatBtn>
							<NewDoc />
						</QatBtn>
						<QatSep $l={3} $r={2} />
						<Caret $c="#333" />
					</Qat>
					<Title>{"DutoanGXD1  -  Dự toán GXD"}</Title>
					<WinButtons $gap={6}>
						<WinMin />
						<WinRestore />
						<WinClose />
					</WinButtons>
				</TitleBar>
				<TabRow>
					<FileTab>File</FileTab>
					<RibbonTab $active>Dự toán GXD</RibbonTab>
					<RibbonTab>Home</RibbonTab>
					<RibbonTab>Insert</RibbonTab>
					<RibbonTab>Page Layout</RibbonTab>
					<RibbonTab>Formulas</RibbonTab>
					<RibbonTab>Data</RibbonTab>
					<RibbonTab>Review</RibbonTab>
					<RibbonTab>View</RibbonTab>
					<RibbonTab>Add-Ins</RibbonTab>
					<HelpArea>
						<Chevron />
						<Help />
						<WinMin />
						<WinRestore />
						<WinClose />
					</HelpArea>
				</TabRow>
			</Head>

			<Ribbon>
				<Group $w={55}>
					<GroupBody>
						<BigButton>
							<BigIcon>
								<House />
							</BigIcon>
							Dự toán
							<span>
								GXD
								<Caret />
							</span>
						</BigButton>
					</GroupBody>
					<GroupLabel>1</GroupLabel>
				</Group>
				<Group $w={126}>
					<GroupBody>
						<SmallRow $gap={8}>
							<Slot>
								<NewDoc />
							</Slot>
							<Slot>
								<OpenFolder />
							</Slot>
							<Slot>
								<Floppy />
							</Slot>
							<Slot>
								<CopySheets />
							</Slot>
							<Slot>
								<RefreshGrid />
							</Slot>
						</SmallRow>
					</GroupBody>
					<GroupLabel>Dự toán GXD</GroupLabel>
				</Group>
				<Group $w={68}>
					<GroupBody>
						<BigButton>
							<BigIcon>
								<SquarePencil />
							</BigIcon>
							Chi phí
							<span>
								xây dựng
								<Caret />
							</span>
						</BigButton>
					</GroupBody>
					<GroupLabel>2</GroupLabel>
				</Group>
				<Group $w={134}>
					<GroupBody>
						<SheetTools />
					</GroupBody>
					<GroupLabel>Xây dựng</GroupLabel>
				</Group>
				<Group $w={59}>
					<GroupBody>
						<BigButton>
							<BigIcon>
								<Tools />
							</BigIcon>
							Chi phí
							<span>
								thiết bị
								<Caret />
							</span>
						</BigButton>
					</GroupBody>
					<GroupLabel>3</GroupLabel>
				</Group>
				<Group $w={135}>
					<GroupBody>
						<SheetTools />
					</GroupBody>
					<GroupLabel>Thiết bị</GroupLabel>
				</Group>
				<Group $w={50}>
					<GroupBody>
						<BigButton>
							<BigIcon>
								<Combos />
							</BigIcon>
							Tiện
							<span>
								ích
								<Caret />
							</span>
						</BigButton>
					</GroupBody>
					<GroupLabel>4</GroupLabel>
				</Group>
				<Group $w={52}>
					<GroupBody>
						<BigButton>
							<BigIcon>
								<Database />
							</BigIcon>
							Dữ
							<span>
								liệu
								<Caret />
							</span>
						</BigButton>
					</GroupBody>
					<GroupLabel>5</GroupLabel>
				</Group>
				<Group $w={50}>
					<GroupBody>
						<BigButton>
							<BigIcon>
								<Question />
							</BigIcon>
							Trợ
							<span>
								giúp
								<Caret />
							</span>
						</BigButton>
					</GroupBody>
					<GroupLabel>6</GroupLabel>
				</Group>
			</Ribbon>

			<FormulaBar>
				<FormulaInner>
					<NameBox>
						<Caret $c="#222" />
					</NameBox>
					<FxWell>
						<FxText>fx</FxText>
					</FxWell>
					<FormulaInput />
					<FormulaDrop>
						<Chevron down />
					</FormulaDrop>
				</FormulaInner>
			</FormulaBar>

			<SheetArea>
				<SheetGrid>
					<Corner />
					{colLetters.map((c) => (
						<ColHead key={c} $sel={c === "B"}>
							{c}
						</ColHead>
					))}

					<RowHead>4</RowHead>
					{Array.from({ length: 8 }).map((_, i) => (
						<Cell key={i} $line="solid" />
					))}
					<Cell $kind="note" $line="solid" $align="right">
						ĐVT: đồng
					</Cell>
					<Blank />

					<RowHead>5</RowHead>
					{heads.map((h, i) => (
						<Cell key={i} $kind="head" $frame $line="solid" $align="center">
							<span>{h}</span>
						</Cell>
					))}
					<Blank />

					<RowHead>6</RowHead>
					{[1, 2, 3, 4, 5, 6, 7, 8, 9].map((i) => (
						<Cell key={i} $kind="index" $frame $line="solid" $align="center">
							[{i}]
						</Cell>
					))}
					<Blank />

					<RowHead>7</RowHead>
					<Cell $frame $line="none" $align="center">
						1
					</Cell>
					<Cell $frame $line="none" $align="center">
						<WideCode>AF.11111</WideCode>
					</Cell>
					<Cell $frame $line="dotted" />
					<Cell $frame $line="dotted" $justify>
						<span>Bê tông sản xuất bằng máy trộn - đổ bằng thủ công, bê tông lót móng, đá 4x6, chiều rộng &lt;=250 cm, mác 100</span>
					</Cell>
					<Cell $frame $line="dotted" $align="center">
						{m3}
					</Cell>
					<Cell $frame $line="dotted" $align="right">
						1,0000
					</Cell>
					<Cell $frame $line="dotted" />
					<Cell $frame $line="dotted" />
					<Cell $frame $line="dotted" />
					<Blank />

					<GroupRow n={8} label="Vật liệu" sum="225.956" />
					{rows.map((r) => (
						<DataRow key={r.n} row={r} />
					))}
					<GroupRow n={13} label="Nhân công" sum="71.804" />
					{rowsB.map((r) => (
						<DataRow key={r.n} row={r} />
					))}
					<GroupRow n={15} label="Máy thi công" sum="17.021" />
					{rowsC.map((r) => (
						<DataRow key={r.n} row={r} />
					))}

					<RowHead $sel>18</RowHead>
					<Cell $frame $line="solid">
						<CommentMark />
					</Cell>
					<Cell $frame $line="solid">
						<Selection />
					</Cell>
					{Array.from({ length: 7 }).map((_, i) => (
						<Cell key={i} $frame $line="solid" />
					))}
					<Blank />

					{[19, 20, 21, 22, 23, 24].map((n) => (
						<EmptyRow key={n} n={n} />
					))}
				</SheetGrid>
				<VScroll>
					<SplitHandle />
					<ScrollArrow />
					<VThumb />
					<ScrollArrow $down />
				</VScroll>
			</SheetArea>

			<TabsBar>
				<TabNav>
					<NavFirst />
					<NavPrev />
					<NavNext />
					<NavLast />
				</TabNav>
				<TabStrip>
					{sheetTabs.map((s, i) => (
						<SheetTab key={i} $bg={s.bg} $fg={s.fg} $active={s.active} $pad={tabPad(i)}>
							{s.t}
						</SheetTab>
					))}
				</TabStrip>
				<HScroll>
					<HHandle />
					<NavPrev />
					<HThumb>|||</HThumb>
					<NavNext />
					<HHandle $end />
				</HScroll>
			</TabsBar>

			<StatusBar>Đang phân tích vật tư ... 0%</StatusBar>

			<Taskbar>
				<StartButton>
					<XpFlag />
					start
				</StartButton>
				<QuickLaunch>
					<Grip />
					<QuickSlot $first>
						<Logo size={15} />
					</QuickSlot>
					<QuickSlot>
						<HandIcon />
					</QuickSlot>
					<QuickSlot>
						<ChartDoc />
					</QuickSlot>
					<More>»</More>
					<Grip />
				</QuickLaunch>
				<Tasks>
					<Task>
						<IeIcon />
						Mời nâng cấp lê...
					</Task>
					<Task>
						<IeIcon />
						Dự toán Enterp...
					</Task>
					<Task>
						<FolderTask />
						SETUP
					</Task>
					<Task>
						<Smiley />
						Yahoo! Messen...
					</Task>
					<Task>
						<ExcelDoc />
						DutoanGXD1
					</Task>
					<Task $active $w={133}>
						<ExcelDoc />
						DutoanGXD1
					</Task>
				</Tasks>
				<Tray>
					<TrayIcon>
						<Smiley />
					</TrayIcon>
					<TrayIcon>
						<MonitorPair />
					</TrayIcon>
					<TrayIcon>
						<MonitorPair cross />
					</TrayIcon>
					<TrayIcon>
						<TrayGlobe />
					</TrayIcon>
					<TrayIcon>
						<Speaker />
					</TrayIcon>
					<TrayIcon>
						<GreenDot />
					</TrayIcon>
					<TrayIcon>
						<Bluetooth />
					</TrayIcon>
					<TrayIcon>
						<OrangeUp />
					</TrayIcon>
					<TrayIcon>
						<Printer />
					</TrayIcon>
					<TrayIcon>
						<VBadge>V</VBadge>
					</TrayIcon>
					<Clock>7:17 PM</Clock>
				</Tray>
			</Taskbar>
		</Page>
	);
};

export default App;
